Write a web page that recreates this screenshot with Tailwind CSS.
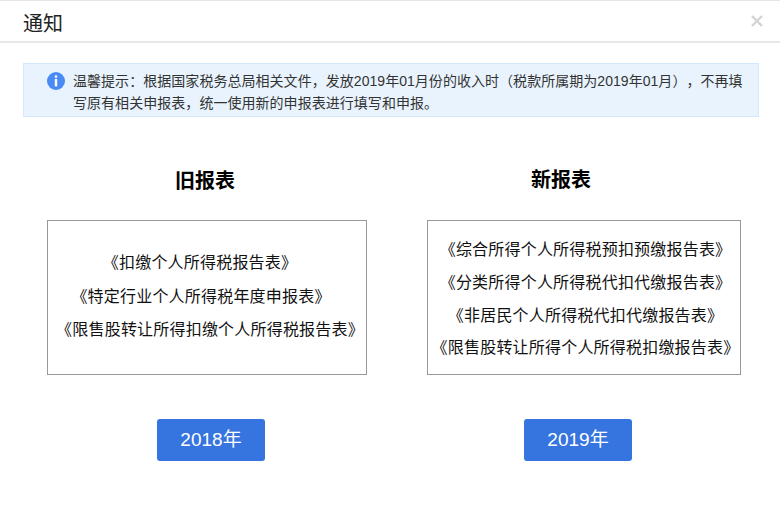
<!DOCTYPE html>
<html lang="zh-CN">
<head>
  <meta charset="UTF-8">
  <title>通知</title>
  <script src="https://cdn.jsdelivr.net/npm/@tailwindcss/browser@4"></script>
</head>
<body class="bg-white h-[509px] overflow-hidden font-['Liberation_Sans','Noto_Sans_CJK_SC',sans-serif] text-black [text-spacing-trim:space-all]">
  <div class="border-t border-[#e5e5e5]">
    <!-- header -->
    <div class="h-[42px] border-b-2 border-[#e8e8e8] flex items-center justify-between pl-[23px] pr-[17px]">
      <h1 class="mt-[5px] text-[20px] leading-[30px] font-normal text-[#222]">通知</h1>
      <svg class="w-[12px] h-[12px]" viewBox="0 0 12 12" fill="none" stroke="#d4d4d4" stroke-width="2.4">
        <path d="M1 1l10 10M11 1L1 11"/>
      </svg>
    </div>

    <!-- notice -->
    <div class="mt-[20px] mr-[21px] ml-[23px] h-[54px] border border-[#d5e8fa] bg-[#e8f3fd] flex pl-[23px] pr-[10px] pt-[6px]">
      <svg class="w-[18px] h-[18px] mt-[2px] shrink-0" viewBox="0 0 18 18">
        <circle cx="9" cy="9" r="9" fill="#4a8af4"/>
        <rect x="7.8" y="3.4" width="2.4" height="2.4" fill="#fff"/>
        <rect x="7.8" y="7" width="2.4" height="7.4" fill="#fff"/>
      </svg>
      <p class="ml-[8px] text-[14px] leading-[20.5px] tracking-[0.04px] text-[#333]">温馨提示<span class="font-['Noto_Sans_CJK_TC']">：</span>根据国家税务总局相关文件<span class="font-['Noto_Sans_CJK_TC']">，</span>发放2019年01月份的收入时（税款所属期为2019年01月）<span class="font-['Noto_Sans_CJK_TC']">，</span>不再填写原有相关申报表<span class="font-['Noto_Sans_CJK_TC']">，</span>统一使用新的申报表进行填写和申报。</p>
    </div>

    <!-- two columns -->
    <div class="flex mt-[49px]">
      <div class="w-[320px] ml-[47px]">
        <h2 class="w-[316px] pt-[1px] text-center text-[20px] leading-[28px] font-bold">旧报表</h2>
        <div class="mt-[25px] h-[155px] border border-[#999] flex flex-col items-center justify-center pb-[2px] text-[16px] leading-[33.5px] tracking-[0.2px] text-[#111]">
          <p class="mr-[14px]">《扣缴个人所得税报告表》</p>
          <p class="mr-[12px]">《特定行业个人所得税年度申报表》</p>
          <p class="ml-[6px]">《限售股转让所得扣缴个人所得税报告表》</p>
        </div>
        <div class="mt-[44px] ml-[110px] w-[108px] h-[42px] rounded-[3px] bg-[#3674e0] text-white text-[19px] leading-[42px] text-center">2018年</div>
      </div>
      <div class="w-[314px] ml-[60px]">
        <h2 class="w-[268px] text-center text-[20px] leading-[28px] font-bold">新报表</h2>
        <div class="mt-[26px] h-[155px] border border-[#999] flex flex-col items-center justify-center pt-[4px] pl-[3px] text-[16px] leading-[32.8px] tracking-[0.2px] text-[#111]">
          <p>《综合所得个人所得税预扣预缴报告表》</p>
          <p>《分类所得个人所得税代扣代缴报告表》</p>
          <p>《非居民个人所得税代扣代缴报告表》</p>
          <p>《限售股转让所得个人所得税扣缴报告表》</p>
        </div>
        <div class="mt-[44px] ml-[97px] w-[108px] h-[42px] rounded-[3px] bg-[#3674e0] text-white text-[19px] leading-[42px] text-center">2019年</div>
      </div>
    </div>
  </div>
</body>
</html>
